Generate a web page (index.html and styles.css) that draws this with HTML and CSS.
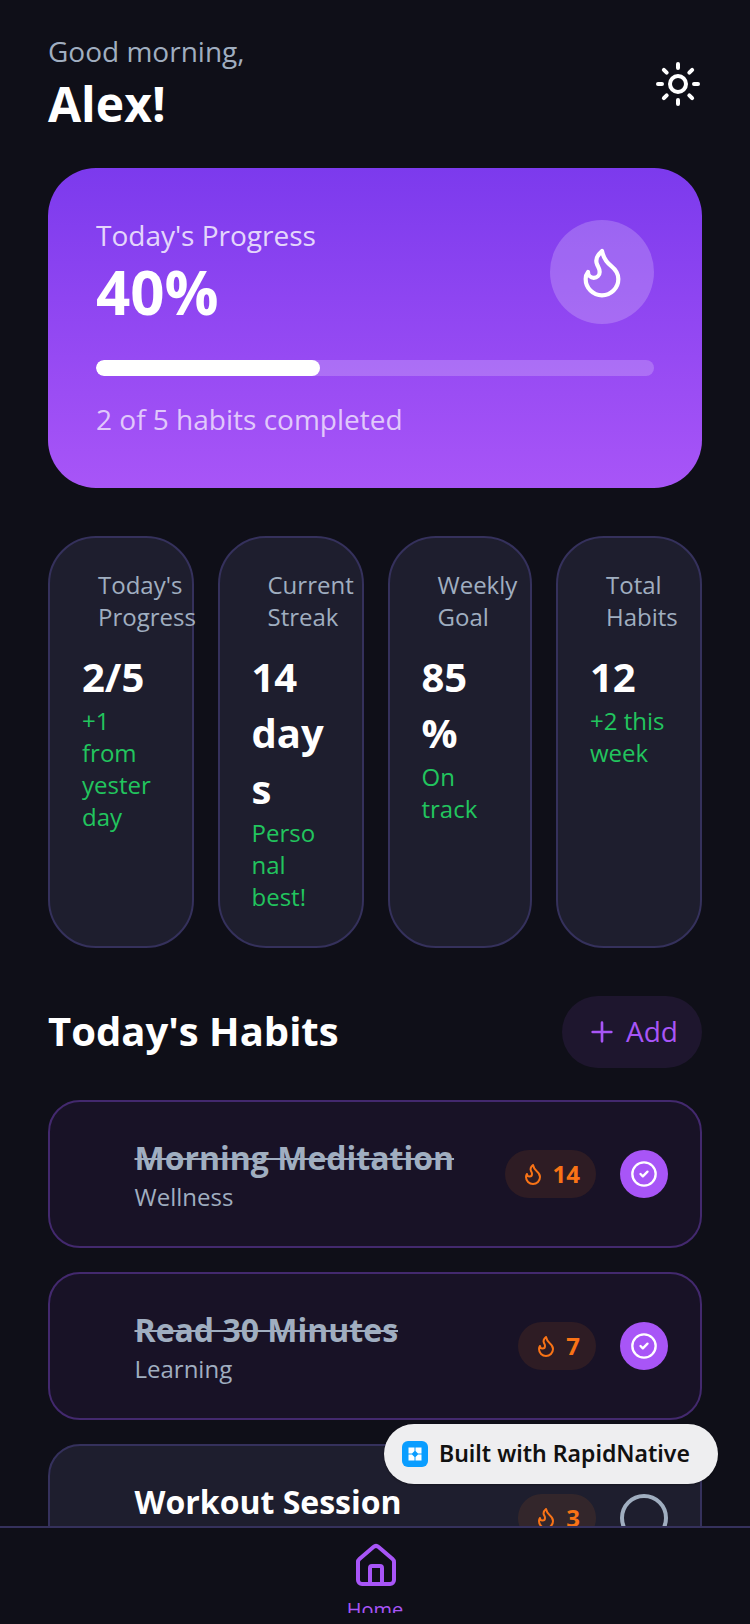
FILE: index.html
```html
<!DOCTYPE html>
<html lang="en">
<head>
<meta charset="utf-8">
<title>Habits</title>
<link rel="stylesheet" href="styles.css">
</head>
<body>
<div class="screen">
  <main class="scroll">
    <header class="header">
      <div>
        <div class="greeting">Good morning,</div>
        <div class="name">Alex!</div>
      </div>
      <svg class="icon-sun" viewBox="0 0 24 24" fill="none" stroke="#fff" stroke-width="2" stroke-linecap="round" stroke-linejoin="round"><circle cx="12" cy="12" r="4"/><path d="M12 2v2M12 20v2M4.93 4.93l1.41 1.41M17.66 17.66l1.41 1.41M2 12h2M20 12h2M6.34 17.66l-1.41 1.41M19.07 4.93l-1.41 1.41"/></svg>
    </header>

    <section class="hero">
      <div class="hero-top">
        <div>
          <div class="hero-title">Today's Progress</div>
          <div class="hero-value">40%</div>
        </div>
        <div class="hero-badge">
          <svg class="icon-flame-lg" viewBox="0 0 24 24" fill="none" stroke="#fff" stroke-width="1.8" stroke-linecap="round" stroke-linejoin="round"><path d="M8.5 14.5A2.5 2.5 0 0 0 11 12c0-1.38-.5-2-1-3-1.072-2.143-.224-4.054 2-6 .5 2.5 2 4.9 4 6.5 2 1.6 3 3.5 3 5.5a7 7 0 1 1-14 0c0-1.153.433-2.294 1-3a2.5 2.5 0 0 0 2.5 2.5z"/></svg>
        </div>
      </div>
      <div class="track"><div class="fill" style="width:40.2%"></div></div>
      <div class="hero-note">2 of 5 habits completed</div>
    </section>

    <section class="stats">
      <div class="stat">
        <div class="stat-label">Today's Progress</div>
        <div class="stat-value">2/5</div>
        <div class="stat-sub">+1 from yesterday</div>
      </div>
      <div class="stat">
        <div class="stat-label">Current Streak</div>
        <div class="stat-value">14 days</div>
        <div class="stat-sub">Personal best!</div>
      </div>
      <div class="stat">
        <div class="stat-label">Weekly Goal</div>
        <div class="stat-value">85%</div>
        <div class="stat-sub">On track</div>
      </div>
      <div class="stat">
        <div class="stat-label">Total Habits</div>
        <div class="stat-value">12</div>
        <div class="stat-sub">+2 this week</div>
      </div>
    </section>

    <section class="section-head">
      <h2 class="section-title">Today's Habits</h2>
      <div class="add">
        <svg class="icon-plus" viewBox="0 0 24 24" fill="none" stroke="#a855f7" stroke-width="2" stroke-linecap="round" stroke-linejoin="round"><path d="M5 12h14M12 5v14"/></svg>
        <span class="add-text">Add</span>
      </div>
    </section>

    <section class="habits">
      <article class="habit done">
        <div class="habit-text">
          <div class="habit-title">Morning Meditation</div>
          <div class="habit-sub">Wellness</div>
        </div>
        <div class="streak">
          <svg class="icon-flame" viewBox="0 0 24 24" fill="none" stroke="#f97316" stroke-width="2" stroke-linecap="round" stroke-linejoin="round"><path d="M8.5 14.5A2.5 2.5 0 0 0 11 12c0-1.38-.5-2-1-3-1.072-2.143-.224-4.054 2-6 .5 2.5 2 4.9 4 6.5 2 1.6 3 3.5 3 5.5a7 7 0 1 1-14 0c0-1.153.433-2.294 1-3a2.5 2.5 0 0 0 2.5 2.5z"/></svg>
          <span class="streak-count">14</span>
        </div>
        <div class="check">
          <svg class="icon-check" viewBox="0 0 24 24" fill="none" stroke="#fff" stroke-width="2" stroke-linecap="round" stroke-linejoin="round"><circle cx="12" cy="12" r="10"/><path d="m9 12 2 2 4-4"/></svg>
        </div>
      </article>
      <article class="habit done">
        <div class="habit-text">
          <div class="habit-title">Read 30 Minutes</div>
          <div class="habit-sub">Learning</div>
        </div>
        <div class="streak">
          <svg class="icon-flame" viewBox="0 0 24 24" fill="none" stroke="#f97316" stroke-width="2" stroke-linecap="round" stroke-linejoin="round"><path d="M8.5 14.5A2.5 2.5 0 0 0 11 12c0-1.38-.5-2-1-3-1.072-2.143-.224-4.054 2-6 .5 2.5 2 4.9 4 6.5 2 1.6 3 3.5 3 5.5a7 7 0 1 1-14 0c0-1.153.433-2.294 1-3a2.5 2.5 0 0 0 2.5 2.5z"/></svg>
          <span class="streak-count">7</span>
        </div>
        <div class="check">
          <svg class="icon-check" viewBox="0 0 24 24" fill="none" stroke="#fff" stroke-width="2" stroke-linecap="round" stroke-linejoin="round"><circle cx="12" cy="12" r="10"/><path d="m9 12 2 2 4-4"/></svg>
        </div>
      </article>
      <article class="habit">
        <div class="habit-text">
          <div class="habit-title">Workout Session</div>
          <div class="habit-sub">Fitness</div>
        </div>
        <div class="streak">
          <svg class="icon-flame" viewBox="0 0 24 24" fill="none" stroke="#f97316" stroke-width="2" stroke-linecap="round" stroke-linejoin="round"><path d="M8.5 14.5A2.5 2.5 0 0 0 11 12c0-1.38-.5-2-1-3-1.072-2.143-.224-4.054 2-6 .5 2.5 2 4.9 4 6.5 2 1.6 3 3.5 3 5.5a7 7 0 1 1-14 0c0-1.153.433-2.294 1-3a2.5 2.5 0 0 0 2.5 2.5z"/></svg>
          <span class="streak-count">3</span>
        </div>
        <div class="ring"></div>
      </article>
    </section>
  </main>

  <nav class="nav">
    <svg class="icon-home" viewBox="0 0 24 24" fill="none" stroke="#a855f7" stroke-width="2" stroke-linecap="round" stroke-linejoin="round"><path d="M15 21v-8a1 1 0 0 0-1-1h-4a1 1 0 0 0-1 1v8"/><path d="M3 10a2 2 0 0 1 .709-1.528l7-5.999a2 2 0 0 1 2.582 0l7 5.999A2 2 0 0 1 21 10v9a2 2 0 0 1-2 2H5a2 2 0 0 1-2-2z"/></svg>
    <div class="nav-label">Home</div>
  </nav>

  <div class="toast">
    <svg class="toast-logo" viewBox="0 0 26 26"><rect width="26" height="26" rx="6" fill="#0a9dff"/><path d="M6.500 6.500h6v3.500l-2.500 2.500h-3.500zM13.500 6.500h6v6h-3.500l-2.500-2.500zM6.500 13.500h3.500l2.500 2.500v3.500h-6zM16 13.500h3.500v6h-6v-3.500z" fill="#fff"/></svg>
    <span class="toast-text">Built with RapidNative</span>
  </div>
</div>
</body>
</html>
```
FILE: styles.css
```css
* { box-sizing: border-box; }
html, body { margin: 0; padding: 0; background: #0f0f18; }
body { font-family: "Open Sans", "Noto Sans", sans-serif; color: #fff; }

.screen { position: relative; width: 750px; height: 1624px; display: flex; flex-direction: column; overflow: hidden; background: #0f0f18; }
.scroll { flex: 1 1 0; min-height: 0; overflow: hidden; padding: 32px 48px 0; }

.header { display: flex; justify-content: space-between; align-items: center; margin-bottom: 32px; }
.greeting { font-size: 28px; line-height: 38px; margin-bottom: 2px; color: #a0aec0; }
.name { font-size: 48px; line-height: 64px; font-weight: 700; }
.icon-sun { width: 48px; height: 48px; display: block; }

.hero { height: 320px; padding: 48px; border-radius: 48px; background: linear-gradient(180deg, #7c3aed, #a855f7); margin-bottom: 48px; }
.hero-top { display: flex; justify-content: space-between; align-items: center; margin-bottom: 32px; }
.hero-title { font-size: 28px; line-height: 38px; margin-bottom: 2px; color: rgba(255,255,255,.8); }
.hero-value { font-size: 60px; line-height: 72px; font-weight: 700; }
.hero-badge { width: 104px; height: 104px; border-radius: 50%; background: rgba(255,255,255,.2); display: flex; align-items: center; justify-content: center; }
.icon-flame-lg { width: 56px; height: 56px; display: block; }
.track { height: 16px; border-radius: 8px; background: rgba(255,255,255,.2); margin-bottom: 24px; overflow: hidden; }
.fill { height: 100%; border-radius: 8px; background: #fff; }
.hero-note { font-size: 28px; line-height: 38px; color: rgba(255,255,255,.7); }

.stats { display: grid; grid-template-columns: 145.5px 146px 144.5px 146px; gap: 24px; margin-bottom: 48px; }
.stat { min-width: 0; padding: 31px 32px 33px; border: 2px solid #35315c; border-radius: 48px; background: #1e1e2e; }
.stat-label { margin-left: 16px; margin-bottom: 16px; font-size: 24px; line-height: 32px; color: #a0aec0; }
.stat-value { font-size: 40px; line-height: 56px; font-weight: 700; overflow-wrap: anywhere; }
.stat-sub { font-size: 24px; line-height: 32px; color: #22c55e; overflow-wrap: anywhere; }

.section-head { display: flex; justify-content: space-between; align-items: center; margin-bottom: 32px; }
.section-title { margin: 0; padding-bottom: 2px; font-size: 40px; line-height: 54px; font-weight: 700; }
.add { height: 72px; padding: 0 24px; display: flex; align-items: center; gap: 8px; border-radius: 36px; background: rgba(168,85,247,.1); color: #a855f7; font-size: 28px; }
.add-text { padding-bottom: 2px; }
.icon-plus { width: 32px; height: 32px; display: block; }

.habits { display: flex; flex-direction: column; gap: 24px; }
.habit { flex: none; display: flex; align-items: center; gap: 24px; padding: 32px; border: 2px solid #35315c; border-radius: 32px; background: #1e1e2e; }
.habit.done { border-color: #43296e; background: #181226; }
.habit-text { flex: 1 1 0; min-width: 0; padding-left: 52.5px; }
.habit-title { font-size: 32px; line-height: 48px; font-weight: 700; }
.done .habit-title { color: #a0aec0; text-decoration: line-through; text-decoration-thickness: 2px; }
.habit-sub { font-size: 24px; line-height: 30px; padding-bottom: 2px; color: #a0aec0; }
.streak { height: 48px; padding: 0 16px; display: flex; align-items: center; gap: 8px; border-radius: 24px; background: rgba(249,115,22,.1); color: #f97316; font-size: 24px; font-weight: 700; }
.streak-count { padding-bottom: 2px; }
.icon-flame { width: 24px; height: 24px; display: block; }
.check { width: 48px; height: 48px; border-radius: 50%; background: #a855f7; display: flex; align-items: center; justify-content: center; }
.icon-check { width: 28px; height: 28px; display: block; }
.ring { width: 48px; height: 48px; border-radius: 50%; border: 4px solid #a0aec0; }

.nav { flex: none; height: 98px; padding-top: 14px; border-top: 2px solid #35315c; background: #0f0f18; display: flex; flex-direction: column; align-items: center; }
.icon-home { width: 48px; height: 48px; display: block; flex: none; margin-left: 2px; }
.nav-label { height: 17px; margin-top: 6px; overflow: hidden; font-size: 20px; line-height: 28px; color: #a855f7; }

.toast { position: absolute; left: 384px; top: 1424px; width: 334px; height: 60px; padding-left: 18px; display: flex; align-items: center; gap: 11px; border-radius: 30px; background: #eeeef0; box-shadow: 0 1px 2px rgba(0,0,0,.3); color: #111; font-family: "Noto Sans", "Open Sans", sans-serif; font-size: 23px; font-weight: 600; }
.toast-text { padding-bottom: 2px; }
.toast-logo { width: 26px; height: 26px; display: block; flex: none; }
```
